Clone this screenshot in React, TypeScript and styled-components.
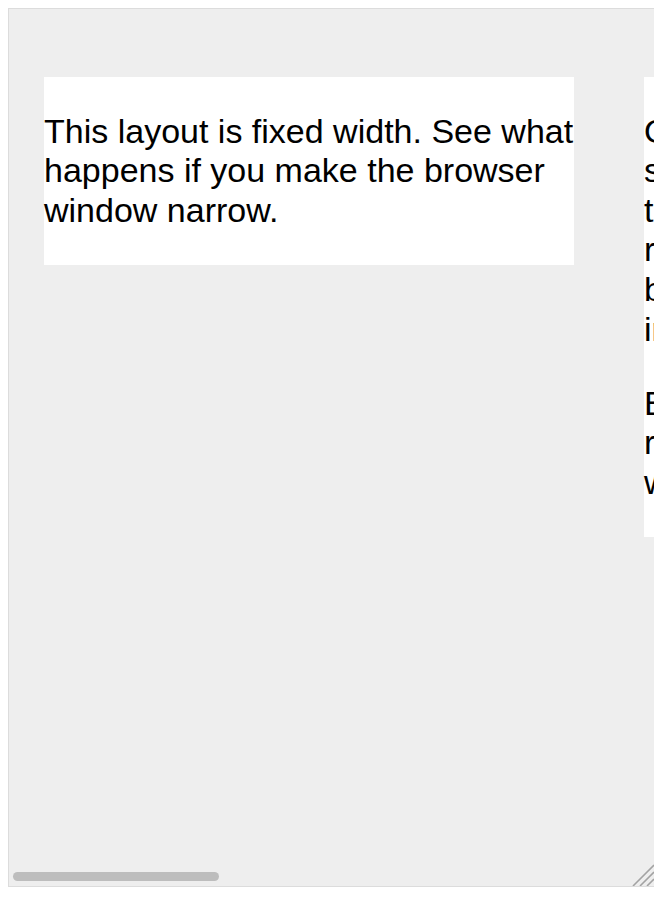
import React from "react";
import styled, { createGlobalStyle } from "styled-components";

const GlobalStyle = createGlobalStyle`
  html, body {
    margin: 0;
    padding: 0;
    background: #ffffff;
  }
  body {
    margin: 8px;
    font-family: "Liberation Sans", Arial, sans-serif;
  }
`;

const Frame = styled.div`
  position: relative;
  box-sizing: border-box;
  width: 647px;
  height: 879px;
  background: #eeeeee;
  border: 1px solid #dcdcdc;
  box-shadow: 0 4px 16px rgba(0, 0, 0, 0.16);
  overflow: hidden;
`;

const Wrapper = styled.div`
  box-sizing: border-box;
  width: 1900px;
  display: flex;
  align-items: flex-start;
  gap: 70px;
  padding: 68px 35px 0 35px;
`;

const Column = styled.div`
  flex: 0 0 530px;
  width: 530px;
  background: #ffffff;
  color: #000000;
  font-size: 34px;
  line-height: 39.6px;
  display: flow-root;
`;

const Para = styled.p`
  margin: 34.6px 0;
`;

const ScrollThumb = styled.div`
  position: absolute;
  left: 4px;
  bottom: 5px;
  width: 206px;
  height: 9px;
  border-radius: 5px;
  background: #bdbdbd;
`;

const Grip = styled.svg`
  position: absolute;
  right: 0;
  bottom: 0;
  width: 22px;
  height: 22px;
  display: block;
`;

export default function App() {
  return (
    <>
      <GlobalStyle />
      <Frame>
        <Wrapper>
          <Column>
            <Para>
              This layout is fixed width. See what happens if you make the
              browser window narrow.
            </Para>
          </Column>
          <Column>
            <Para>
              One November night in the year seventeen eighty-two, so the story
              tells, two brothers sat over their roaring winter fire in the
              little old brick house of the Montgolfiers, intently watching the
              grey smoke.
            </Para>
            <Para>
              Before that night, countless people regularly watched the rising
              smoke without any special inspiration.
            </Para>
          </Column>
        </Wrapper>
        <ScrollThumb />
        <Grip viewBox="0 0 22 22">
          <g stroke="#a3a3a3" strokeWidth="1.6" strokeLinecap="butt">
            <line x1="1" y1="22" x2="22" y2="1" />
            <line x1="8" y1="22" x2="22" y2="8" />
            <line x1="15" y1="22" x2="22" y2="15" />
          </g>
        </Grip>
      </Frame>
    </>
  );
}
